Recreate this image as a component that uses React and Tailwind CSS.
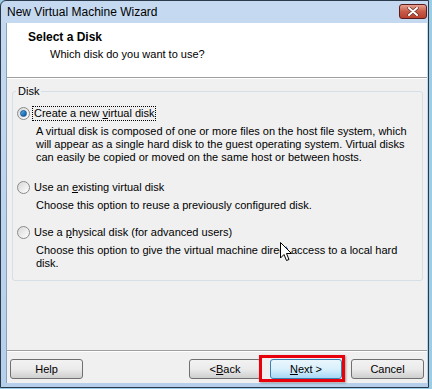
import React from 'react';

const font = { fontFamily: '"Liberation Sans", Arial, sans-serif' };

function Radio({ checked }) {
  return (
    <div className="w-[13px] h-[13px] rounded-full border border-[#8a8a8a] bg-gradient-to-br from-[#d8d8d8] to-[#ffffff] flex items-center justify-center shrink-0">
      {checked && (
        <div className="w-[7px] h-[7px] rounded-full bg-gradient-to-br from-[#4fb4f0] to-[#0f4f9a] border border-[#1d5a92]" />
      )}
    </div>
  );
}

function Option({ checked, focused, label, lines, className = '' }) {
  return (
    <div className={className}>
      <div className="flex items-center h-[16px] pl-[4px]">
        <Radio checked={checked} />
        <span className={`ml-[3px] px-[1px] leading-[13px] ${focused ? 'outline outline-1 outline-dotted outline-black' : ''}`}>
          {label}
        </span>
      </div>
      <div className="pl-[23px] mt-[4px] leading-[13px]">
        {lines.map((l, i) => (
          <div key={i} className="whitespace-nowrap">{l}</div>
        ))}
      </div>
    </div>
  );
}

function Button({ children, primary, className = '' }) {
  const look = primary
    ? 'border-[#3c7fb1] bg-gradient-to-b from-[#eaf6fd] via-[#d9f0fc] to-[#a7d9f5]'
    : 'border-[#707070] bg-gradient-to-b from-[#f2f2f2] via-[#ebebeb] to-[#cfcfcf]';
  return (
    <div className={`h-[20px] rounded-[3px] border ${look} flex items-center justify-center text-[11px] text-black ${className}`}>
      {children}
    </div>
  );
}

export default function App() {
  return (
    <div className="w-[432px] h-[389px] bg-[#9ccde6] overflow-hidden relative text-[11px] text-black" style={font}>
      <div className="w-[429px] h-[388px] bg-gradient-to-b from-[#c5daf0] to-[#b6cfea] border border-[#2b3a4a] rounded-tl-[6px] flex flex-col">
        {/* title bar */}
        <div className="h-[22px] flex items-center justify-between pl-[6px] pr-[1px]">
          <span className="text-[12px] text-black">New Virtual Machine Wizard</span>
          <div className="w-[28px] h-[15px] mb-[4px] mt-[3px] rounded-[3px] border border-[#5a1d1d] bg-gradient-to-b from-[#e8a291] via-[#c75a47] to-[#b8412f] flex items-center justify-center">
            <svg width="12" height="9" viewBox="0 0 12 9">
              <path d="M2 1 L10 8 M10 1 L2 8" stroke="#5a2a22" strokeWidth="3.2" strokeLinecap="round" />
              <path d="M2 1 L10 8 M10 1 L2 8" stroke="#ffffff" strokeWidth="2" strokeLinecap="round" />
            </svg>
          </div>
        </div>
        {/* client */}
        <div className="flex-1 ml-[5px] mr-[1px] mb-[4px] bg-[#f0f0f0] flex flex-col border-l border-[#8aa4c0]">
          <div className="h-[55px] bg-white border-b border-[#a0a0a0] pt-[8px]">
            <div className="pl-[21px] font-bold text-[12px] leading-[13px]">Select a Disk</div>
            <div className="pl-[43px] mt-[4px] leading-[13px]">Which disk do you want to use?</div>
          </div>
          <div className="h-px bg-white" />
          <div className="mt-[12px] ml-[5px] mr-[4px] h-[190px] border border-[#d5dfe5] rounded-[3px] relative">
            <span className="absolute left-[3px] top-[-8px] px-[2px] bg-[#f0f0f0] leading-[14px]">Disk</span>
            <div className="pt-[13px] flex flex-col">
              <Option
                checked
                focused
                label={<>Create a new <u>v</u>irtual disk</>}
                lines={[
                  'A virtual disk is composed of one or more files on the host file system, which',
                  'will appear as a single hard disk to the guest operating system. Virtual disks',
                  'can easily be copied or moved on the same host or between hosts.',
                ]}
              />
              <Option
                className="mt-[15px]"
                label={<>Use an <u>e</u>xisting virtual disk</>}
                lines={['Choose this option to reuse a previously configured disk.']}
              />
              <Option
                className="mt-[12px]"
                label={<>Use a <u>p</u>hysical disk (for advanced users)</>}
                lines={[
                  'Choose this option to give the virtual machine direct access to a local hard',
                  'disk.',
                ]}
              />
            </div>
          </div>
          <div className="mt-[69px] h-px bg-[#a0a0a0]" />
          <div className="h-px bg-white" />
          <div className="mt-[7px] flex items-center px-[3px]">
            <Button className="w-[73px]">Help</Button>
            <div className="flex-1" />
            <Button className="w-[72px]">&lt; <u>B</u>ack</Button>
            <Button primary className="w-[72px] ml-[9px]"><u>N</u>ext &gt;</Button>
            <Button className="w-[73px] ml-[9px]">Cancel</Button>
          </div>
        </div>
      </div>
      {/* red highlight around Next */}
      <div className="absolute left-[259px] top-[355px] w-[86px] h-[27px] border-[3px] border-[#e8000b] shadow-[1px_1px_2px_rgba(0,0,0,0.35)]" />
      {/* mouse cursor */}
      <svg className="absolute left-[280px] top-[242px]" width="13" height="20" viewBox="0 0 13 20">
        <path d="M0.5 0.5 L0.5 16 L4 12.5 L6.5 18.5 L9 17.5 L6.5 11.5 L11.5 11.5 Z" fill="#fff" stroke="#000" strokeWidth="1" strokeLinejoin="round" />
      </svg>
    </div>
  );
}
